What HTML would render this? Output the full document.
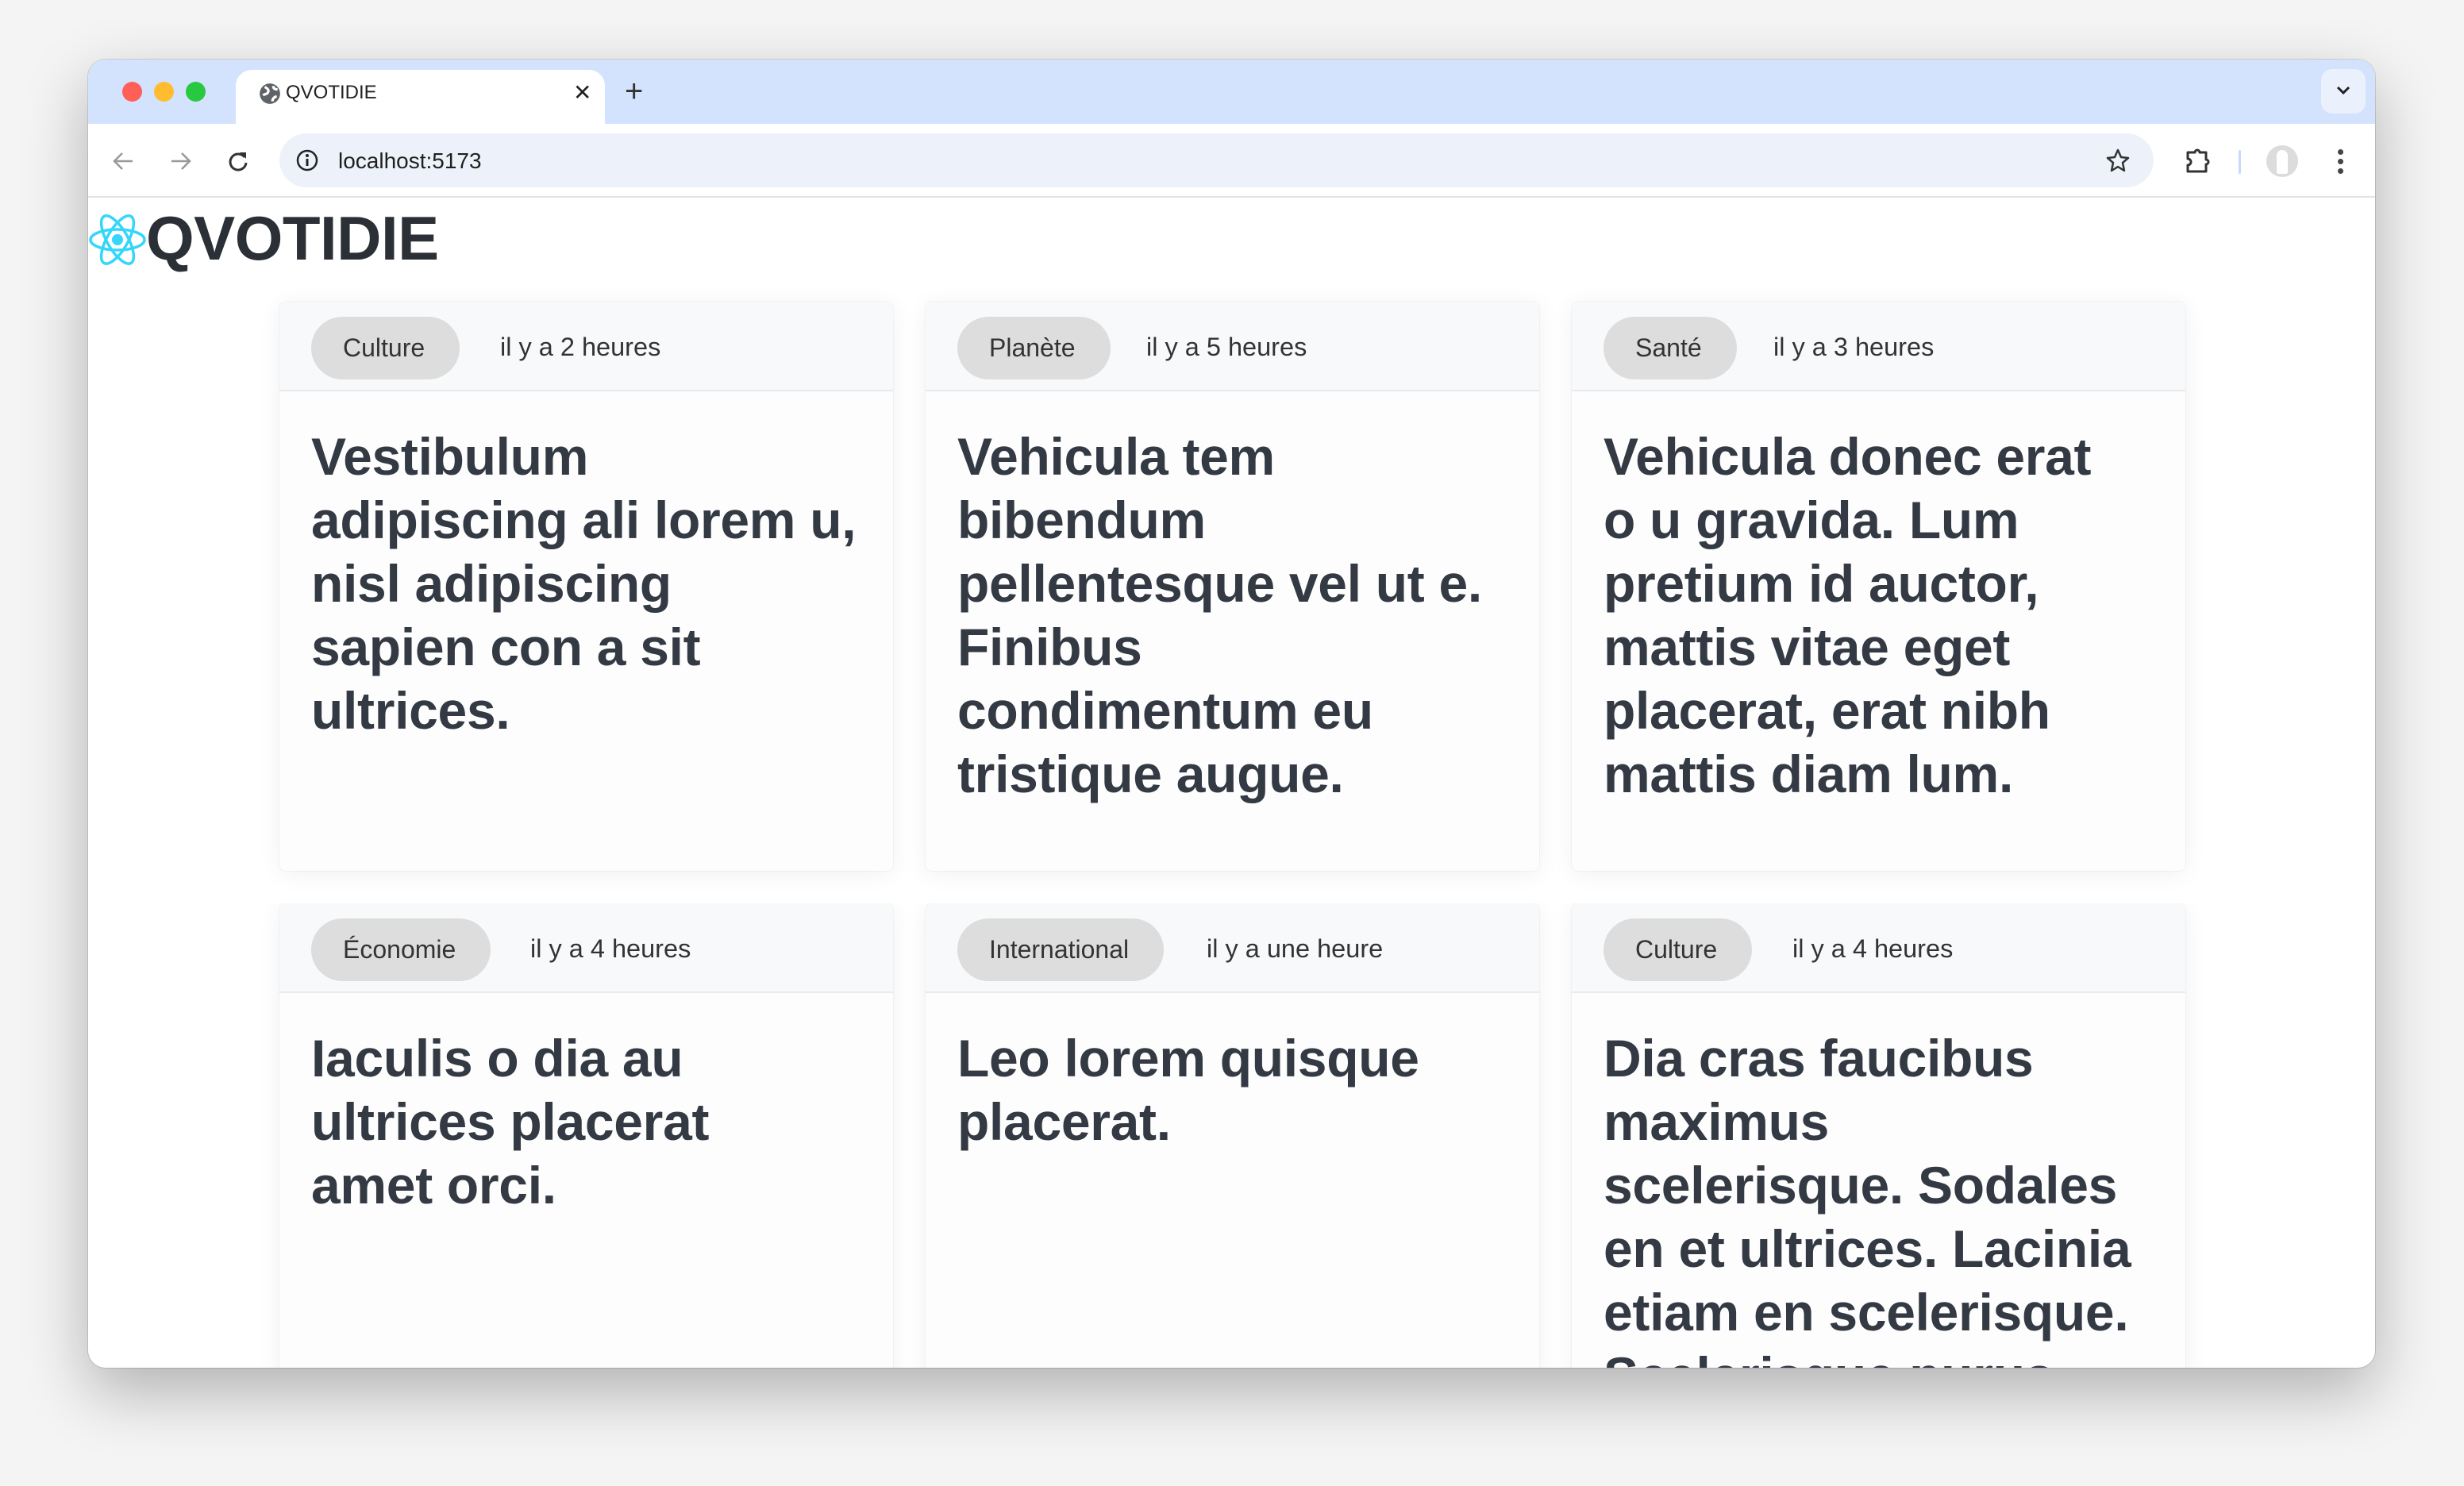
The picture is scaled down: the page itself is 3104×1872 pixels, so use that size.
<!DOCTYPE html>
<html><head><meta charset="utf-8"><style>
*{box-sizing:border-box;margin:0;padding:0}
body{width:3104px;height:1872px;background:#f4f4f5;font-family:"Liberation Sans",sans-serif;position:relative;overflow:hidden}
.win{position:absolute;left:111px;top:75px;width:2881px;height:1648px;border-radius:22px;overflow:hidden;background:#fff;box-shadow:0 30px 80px rgba(0,0,0,.28),0 0 0 1px rgba(0,0,0,.12)}
.tabbar{position:absolute;left:0;top:0;width:100%;height:81px;background:#d3e3fd}
.dot{position:absolute;top:28px;width:25px;height:25px;border-radius:50%}
.tab{position:absolute;left:186px;top:13px;width:465px;height:70px;background:#fff;border-radius:20px 20px 0 0}
.tab span{position:absolute;left:63px;top:15px;font-size:24px;color:#222}
.toolbar{position:absolute;top:81px;left:0;width:100%;height:93px;background:#fff;border-bottom:2px solid #e3e3e3}
.addr{position:absolute;left:241px;top:12px;width:2361px;height:68px;background:#edf2fa;border-radius:34px}
.addr span{position:absolute;left:74px;top:19px;font-size:28px;color:#1f1f1f}
.logo{position:absolute;left:0;top:176px;height:90px}
.logo b{position:absolute;left:73px;top:4px;font-size:78px;color:#2b2f36;font-weight:bold;letter-spacing:-0.5px}
.card{position:absolute;width:773px;background:#fdfdfe;border-radius:8px;box-shadow:0 4px 30px rgba(0,0,0,.06),0 0 0 1px rgba(0,0,0,.03);overflow:hidden}
.hd{height:113px;background:#f8f9fa;border-bottom:2px solid #e7eaee;position:relative}
.pill{position:absolute;left:40px;top:19px;height:79px;border-radius:40px;background:#dddddd;font-size:32px;color:#333;line-height:79px;padding:0 44px 0 40px}
.meta{position:absolute;top:0;line-height:115px;font-size:32.5px;color:#333}
.t{padding:42px 40px 0;font-size:66px;line-height:80px;font-weight:bold;color:#343a43;white-space:nowrap;letter-spacing:-0.3px}
</style></head><body>
<div class="win">
<div class="tabbar">
<div class="dot" style="left:43px;background:#fe5f57"></div>
<div class="dot" style="left:83px;background:#febc2e"></div>
<div class="dot" style="left:123px;background:#28c840"></div>
<div class="tab">
<svg style="position:absolute;left:28px;top:15px" width="30" height="30" viewBox="0 0 28 28"><circle cx="14" cy="14" r="12" fill="#5f6368"/><path d="M8 6c3 2 5 3 4 6s-4 2-6 4M17 23c0-3 2-5 5-6M18 5c0 3 2 4 5 4" stroke="#fff" stroke-width="3" fill="none"/></svg>
<span>QVOTIDIE</span>
<span style="left:425px;top:12px;font-size:28px">✕</span>
</div>
<span style="position:absolute;left:676px;top:18px;font-size:40px;color:#333">+</span>
<div style="position:absolute;left:2813px;top:12px;width:56px;height:56px;border-radius:14px;background:#eaf1fd"><svg style="position:absolute;left:18px;top:20px" width="20" height="14" viewBox="0 0 20 14"><path d="M3 3l7 7 7-7" stroke="#222" stroke-width="3" fill="none"/></svg></div>
</div>
<div class="toolbar">
<svg style="position:absolute;left:30px;top:34px" width="28" height="26" viewBox="0 0 28 26"><path d="M26 13H4M13 3L3 13l10 10" stroke="#999" stroke-width="2.5" fill="none"/></svg>
<svg style="position:absolute;left:103px;top:34px" width="28" height="26" viewBox="0 0 28 26"><path d="M2 13h22M15 3l10 10-10 10" stroke="#999" stroke-width="2.5" fill="none"/></svg>
<svg style="position:absolute;left:175px;top:33px" width="28" height="28" viewBox="0 0 28 28"><path d="M22 9A10 10 0 1 0 24 16" stroke="#333" stroke-width="3" fill="none"/><path d="M16 3h8v8z" fill="#333"/></svg>
<div class="addr">
<svg style="position:absolute;left:20px;top:19px" width="30" height="30" viewBox="0 0 30 30"><circle cx="15" cy="15" r="12" stroke="#222" stroke-width="2.5" fill="none"/><path d="M15 13v9" stroke="#222" stroke-width="3"/><circle cx="15" cy="9" r="2" fill="#222"/></svg>
<span>localhost:5173</span>
<svg style="position:absolute;left:2300px;top:18px" width="32" height="32" viewBox="0 0 32 32"><path d="M16 3l4 9 9 1-7 6 2 10-8-5-8 5 2-10-7-6 9-1z" stroke="#333" stroke-width="2.5" fill="none" stroke-linejoin="round"/></svg>
</div>
<svg style="position:absolute;left:2641px;top:30px" width="34" height="34" viewBox="0 0 34 34"><path d="M4 6h9a3 3 0 0 1 6 0h8v9a3 3 0 0 1 0 6v9H4v-8a3 3 0 0 0 0-8z" stroke="#333" stroke-width="3" fill="none" stroke-linejoin="round"/></svg>
<div style="position:absolute;left:2709px;top:33px;width:3px;height:30px;background:#c7dafc;border-radius:2px"></div>
<div style="position:absolute;left:2744px;top:27px;width:40px;height:40px;border-radius:50%;background:#dcdcdc"><div style="position:absolute;left:13px;top:6px;width:14px;height:30px;border-radius:8px 8px 3px 3px;background:#fff"></div></div>
<div style="position:absolute;left:2834px;top:32px;width:7px;height:7px;border-radius:50%;background:#444;box-shadow:0 12px 0 #444,0 24px 0 #444"></div>
</div>
<div class="logo">
<svg style="position:absolute;left:0;top:16px" width="74" height="70" viewBox="-37 -35 74 70"><g stroke="#35d6fb" stroke-width="3.5" fill="none"><ellipse rx="34" ry="13"/><ellipse rx="34" ry="13" transform="rotate(60)"/><ellipse rx="34" ry="13" transform="rotate(120)"/></g><circle r="7" fill="#35d6fb"/></svg>
<b>QVOTIDIE</b>
</div>
</div>
<div class="card" style="left:352px;top:380px;height:717px"><div class="hd"><span class="pill">Culture</span><span class="meta" style="left:278px">il y a 2 heures</span></div><div class="t">Vestibulum<br>adipiscing ali lorem u,<br>nisl adipiscing<br>sapien con a sit<br>ultrices.</div></div>
<div class="card" style="left:1166px;top:380px;height:717px"><div class="hd"><span class="pill">Planète</span><span class="meta" style="left:278px">il y a 5 heures</span></div><div class="t">Vehicula tem<br>bibendum<br>pellentesque vel ut e.<br>Finibus<br>condimentum eu<br>tristique augue.</div></div>
<div class="card" style="left:1980px;top:380px;height:717px"><div class="hd"><span class="pill">Santé</span><span class="meta" style="left:254px">il y a 3 heures</span></div><div class="t">Vehicula donec erat<br>o u gravida. Lum<br>pretium id auctor,<br>mattis vitae eget<br>placerat, erat nibh<br>mattis diam lum.</div></div>
<div style="position:absolute;left:111px;top:1138px;width:2881px;height:585px;overflow:hidden;border-radius:0 0 22px 22px">
<div class="card" style="left:241px;top:0;height:700px"><div class="hd"><span class="pill">Économie</span><span class="meta" style="left:316px">il y a 4 heures</span></div><div class="t">Iaculis o dia au<br>ultrices placerat<br>amet orci.</div></div>
<div class="card" style="left:1055px;top:0;height:700px"><div class="hd"><span class="pill">International</span><span class="meta" style="left:354px">il y a une heure</span></div><div class="t">Leo lorem quisque<br>placerat.</div></div>
<div class="card" style="left:1869px;top:0;height:700px"><div class="hd"><span class="pill">Culture</span><span class="meta" style="left:278px">il y a 4 heures</span></div><div class="t">Dia cras faucibus<br>maximus<br>scelerisque. Sodales<br>en et ultrices. Lacinia<br>etiam en scelerisque.<br>Scelerisque purus</div></div>
</div>
</body></html>
